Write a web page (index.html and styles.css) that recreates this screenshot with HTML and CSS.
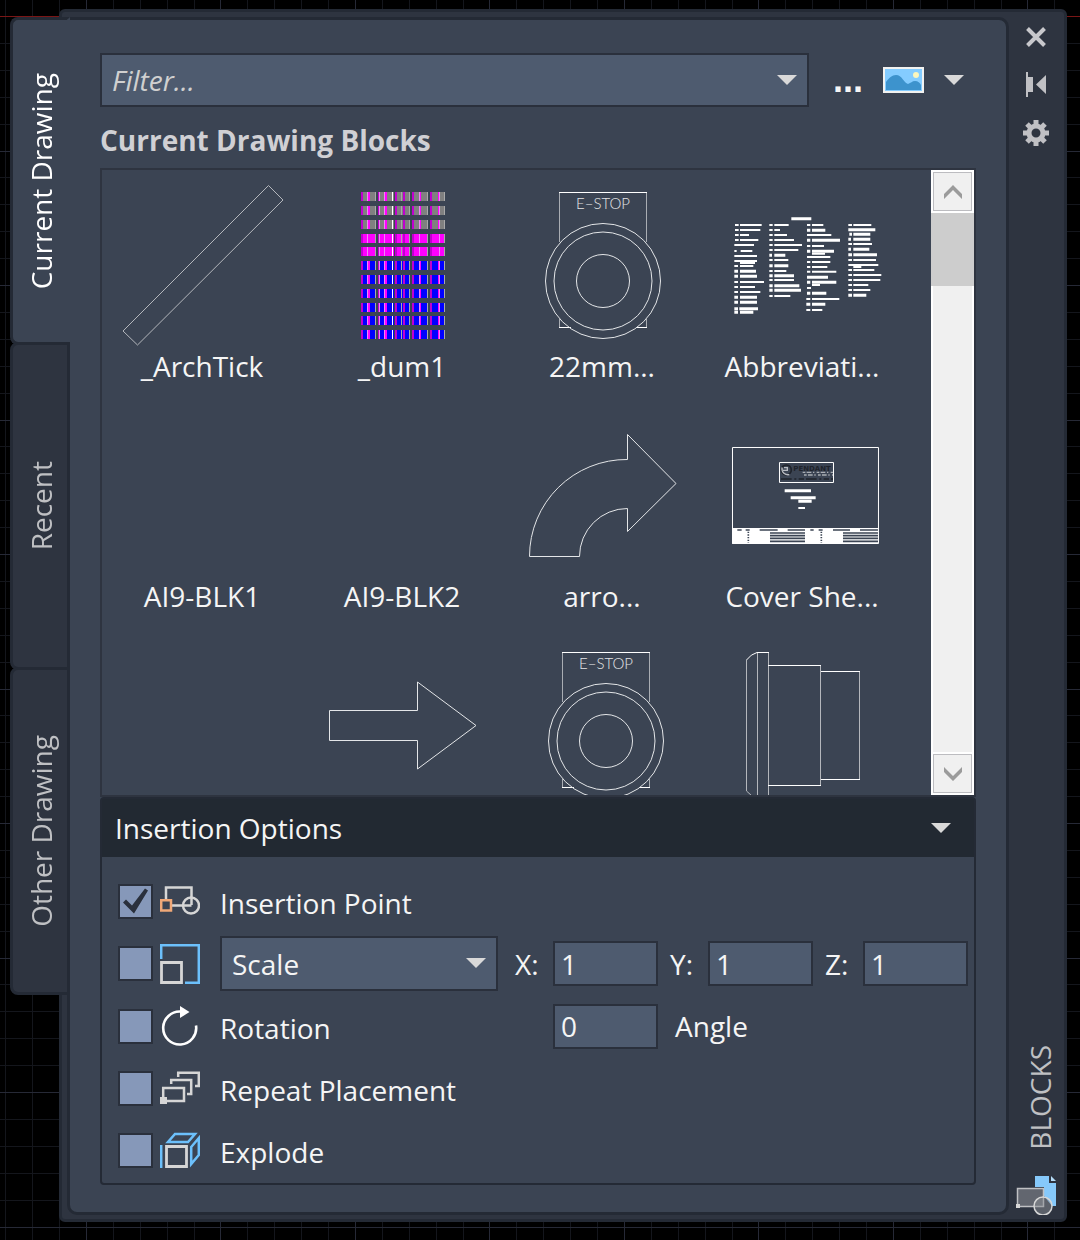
FILE: index.html
```html
<!DOCTYPE html>
<html lang="en">

<head>
    <meta charset="UTF-8">
    <meta name="viewport" content="width=device-width, initial-scale=1.0">
    <title>Blocks</title>
    <link rel="stylesheet" href="styles.css">
</head>

<body>

    <!-- drawing area grid behind the palette -->
    <svg class="canvas-grid" aria-hidden="true">
        <defs>
            <pattern id="grid" x="86" y="16" width="269" height="269" patternUnits="userSpaceOnUse">
                <path stroke="#14161c" d="M27.5 0V269M54.5 0V269M81.5 0V269M108.5 0V269M161.5 0V269M188.5 0V269M215.5 0V269M242.5 0V269M0 27.5H269M0 54.5H269M0 81.5H269M0 108.5H269M0 161.5H269M0 188.5H269M0 215.5H269M0 242.5H269" />
                <path stroke="#262936" d="M.5 0V269M134.5 0V269M0 .5H269M0 135.5H269" />
            </pattern>
        </defs>
        <rect width="100%" height="100%" fill="url(#grid)" />
        <path d="M0 16.5H4000" stroke="#7a1616" />
    </svg>

    <div class="palette">
        <nav class="tabs">
            <button class="tab active" type="button"><span>Current Drawing</span></button>
            <button class="tab" type="button"><span>Recent</span></button>
            <button class="tab" type="button"><span>Other Drawing</span></button>
        </nav>

        <main class="panel">
            <div class="toolbar">
                <div class="combo">
                    <input class="field" type="text" placeholder="Filter..." aria-label="Filter">
                    <svg class="arrow" viewBox="0 0 20 10"><path d="M0 0H20L10 10Z" /></svg>
                </div>
                <button class="tool browse" type="button">...</button>
                <button class="tool" type="button" aria-label="Thumbnail view">
                    <svg width="41" height="26" viewBox="0 0 41 26">
                        <path fill="#f2f2f0" d="M0 0H41V26H0Z" />
                        <path fill="#84ccff" d="M2 2H39V24H2Z" />
                        <path fill="#3d93cd" d="M3 15C6 11 9 8 13 8C19 8 21 16 25 17C28 16 29 14 32 14C35 14 37 16 38 18V23H3Z" />
                        <circle cx="33" cy="8" r="3" fill="#fbf6bd" />
                    </svg>
                </button>
                <button class="tool" type="button" aria-label="View options">
                    <svg width="20" height="10" viewBox="0 0 20 10"><path fill="#d9d9d9" d="M0 0H20L10 10Z" /></svg>
                </button>
            </div>

            <h2 class="heading">Current Drawing Blocks</h2>

            <div class="list">
                <div class="blocks">
                    <div class="block">
                        <svg class="thumb" viewBox="0 0 160 160"><path stroke="#b4b7bc" d="M1 146L146.5 .5 161 15 15.500 160Z" /></svg>
                        <span class="name">_ArchTick</span>
                    </div>
                    <div class="block">
                        <svg class="thumb" viewBox="0 0 160 160">
                            <defs>
                                <g id="row" stroke="none">
                                    <path fill="currentColor" d="M39 0H54V9H39ZM56 0H72V9H56ZM73 0H88V9H73ZM90 0H106V9H90ZM108 0H123V9H108Z" />
                                    <path fill="#c000d0" d="M39 0H41V9H39ZM56 0H57V9H56ZM73 0H75V9H73ZM81 0H83V9H81ZM90 0H92V9H90ZM108 0H110V9H108Z" />
                                    <path fill="#f0f" d="M46 0H48V9H46ZM63 0H65V9H63ZM98 0H99V9H98ZM116 0H117V9H116Z" />
                                    <path fill="#ee88f4" d="M45 0H46V9H45ZM57 0H58V9H57ZM62 0H63V9H62ZM97 0H98V9H97ZM117 0H118V9H117Z" />
                                    <path fill="#a9a9a9" d="M53 0H54V9H53ZM79 0H80V9H79ZM87 0H88V9H87ZM105 0H106V9H105ZM122 0H123V9H122Z" />
                                    <path fill="#fff" d="M70 0H71V9H70Z" />
                                </g>
                            </defs>
                            <use href="#row" y="7" color="#808080" />
                            <use href="#row" y="21" color="#808080" />
                            <use href="#row" y="35" color="#808080" />
                            <use href="#row" y="49" color="#f0f" />
                            <use href="#row" y="62" color="#f0f" />
                            <use href="#row" y="76" color="#00f" />
                            <use href="#row" y="90" color="#00f" />
                            <use href="#row" y="104" color="#00f" />
                            <use href="#row" y="118" color="#00f" />
                            <use href="#row" y="131" color="#00f" />
                            <use href="#row" y="145" color="#00f" />
                        </svg>
                        <span class="name">_dum1</span>
                    </div>
                    <div class="block">
                        <svg class="thumb" viewBox="0 0 160 160">
                            <defs>
                                <g id="estop">
                                    <path stroke="#a9adb3" d="M37.500 57V7.500M124.500 7.500V57M37.500 134V142M124.500 134V142" />
                                    <path stroke="#fff" d="M37 7.500H125M37 142.500H49M114 142.500H125" />
                                    <circle cx="81" cy="96" r="57.500" />
                                    <circle cx="81" cy="96" r="49" />
                                    <circle cx="81" cy="96" r="26.500" />
                                    <text class="plate" x="81" y="24">E–STOP</text>
                                </g>
                            </defs>
                            <use href="#estop" />
                        </svg>
                        <span class="name">22mm...</span>
                    </div>
                    <div class="block">
                        <svg class="thumb" viewBox="0 0 160 160">
                            <g transform="translate(-12 5) scale(.3333)" stroke="#fff">
                                <path stroke-width="6" d="M75 105h11M90 105H155M75 120h11M90 120H151M75 135h11M90 135H117M75 150h11M90 150H145M73 165H132M73 183h7M92 183H127M73 198H141M73 213H141M90 219H135M73 228h11M90 228H130M73 276h11M90 276H162M73 291h11M90 291H135M73 306h11M90 306H151" />
                                <path stroke-width="9" d="M244 86H304M73 244h11M90 244H138M73 259h11M90 259H141M73 322h11M90 322H141M73 337h11M90 337H141M73 356h11M88 356H144M73 367h11M90 367H130" />
                                <path stroke-width="6" d="M178 105h10M193 105H236M178 120h10M193 120H210M178 135h10M193 135H231M178 150h10M193 150H252M178 165h10M193 165H276M178 180h10M193 180H265M178 210h10M193 210H235M178 243h10M193 243H229M178 270h10M193 270H252M178 318h10M193 318H241" />
                                <path stroke-width="9" d="M178 196h8M193 196H226M178 227h10M193 227H235M178 257h10M193 257H252M178 287h10M193 287H268M178 301h10M193 301H273" />
                                <path stroke-width="6" d="M291 105h10M306 105H340M291 135H364M291 168h10M306 168H342M306 191H345M291 201H361M291 216h10M306 216H361M291 231h10M306 231H352M291 245h10M306 245H379M306 285H330M291 294h12M289 327h12M306 327H388M289 360h12M306 360H337" />
                                <path stroke-width="9" d="M291 121h10M306 121H346M291 151h10M306 151H390M291 184h10M306 184H372M291 262H354M291 277h10M306 277H379M291 310h10M306 310H349M289 343h12M306 343H346" />
                                <path stroke-width="6" d="M415 105h11M430 105H484M415 162h11M430 162H486M415 210h11M430 210H498M415 225H505M430 231H454M415 240h11M430 240H493M415 255h11M430 255H514M415 270h11M430 270H511M415 285h11M430 285H475M415 300h11M430 300H481" />
                                <path stroke-width="9" d="M415 119H496M418 133h8M430 133H481M415 148h8M430 148H481M415 178h8M430 178H478M415 194h11M430 194H501M415 316h11M430 316H469" />
                            </g>
                        </svg>
                        <span class="name">Abbreviati...</span>
                    </div>

                    <div class="block">
                        <svg class="thumb" viewBox="0 0 160 160"></svg>
                        <span class="name">AI9-BLK1</span>
                    </div>
                    <div class="block">
                        <svg class="thumb" viewBox="0 0 160 160"></svg>
                        <span class="name">AI9-BLK2</span>
                    </div>
                    <div class="block">
                        <svg class="thumb" viewBox="0 0 160 160"><path d="M7.500 141.500H57.500A48 48 0 0 1 105.500 93.500V116.500L154 68.500 105.500 19.500V44.500A97 97 0 0 0 7.500 141.500Z" /></svg>
                        <span class="name">arro...</span>
                    </div>
                    <div class="block">
                        <svg class="thumb" viewBox="0 0 160 160">
                            <g transform="translate(-12 15) scale(.3333)" stroke="#fff">
                                <path stroke-width="3" d="M67.500 52.500H505.500V340.500H67.500ZM208.500 97.500H370.500V157.500H208.500Z" />
                                <circle cx="229" cy="120" r="15" stroke="#1f232b" stroke-width="5" />
                                <path stroke="#b9bcc2" stroke-width="4" d="M216 112C214 128 226 136 238 134M219 121H232V113H222" />
                                <text class="logo" x="250" y="122">PENDANT</text>
                                <path stroke="#a9adb3" stroke-width="4" stroke-dasharray="8 4 14 5 4 7" d="M278 127H369M282 135H369" />
                                <path stroke="#1f232b" stroke-width="5" stroke-dasharray="32 8 6 7 16 6" d="M213 147H369" />
                                <path stroke-width="9" d="M224 182H303M242 203H317M265 214H305" />
                                <path stroke-width="6" d="M265 234H285" />
                                <path stroke="none" fill="#fff" d="M66 294H505V341H66Z" />
                                <path stroke="#3b4453" stroke-width="5" d="M82 300H95M107 300H119M149 300H203M233 300H285M301 300H311M326 300H338M369 300H420M450 300H504" />
                                <path stroke="#3b4453" stroke-width="5" d="M180 309H285M180 317H285M180 325H285M180 334H285M399 309H504M399 317H504M399 325H504M399 334H504" />
                                <path stroke="#3b4453" stroke-width="5" stroke-dasharray="4 4" d="M115 305V338M334 305V338" />
                            </g>
                        </svg>
                        <span class="name">Cover She...</span>
                    </div>

                    <div class="block">
                        <svg class="thumb" viewBox="0 0 160 160"></svg>
                    </div>
                    <div class="block">
                        <svg class="thumb" viewBox="0 0 160 160"><path d="M7.500 65.500H95.500V37L154 80.500 95.500 124V95.500H7.500Z" /></svg>
                    </div>
                    <div class="block">
                        <svg class="thumb" viewBox="0 0 160 160"><use href="#estop" x="3" /></svg>
                    </div>
                    <div class="block">
                        <svg class="thumb" viewBox="0 0 160 160">
                            <path stroke="#b4b7bc" d="M24.500 15V146M35.500 8V160M46.500 8V160M98.500 20V141M137.500 26V135M24.500 146L30 151" />
                            <path stroke="#fff" d="M24.500 15Q29 9 35 7.500H47M46 20.500H99M46 140.500H99M99 26.500H138M99 134.500H138" />
                        </svg>
                    </div>
                </div>

                <div class="scrollbar">
                    <button class="scroll-btn" type="button" aria-label="Scroll up">
                        <svg width="18" height="14" viewBox="0 0 18 14"><path fill="#9b9b9b" d="M0 9L9 0 18 9V14L9 5 0 14Z" /></svg>
                    </button>
                    <div class="scroll-thumb"></div>
                    <div class="scroll-track"></div>
                    <button class="scroll-btn" type="button" aria-label="Scroll down">
                        <svg width="18" height="14" viewBox="0 0 18 14"><path fill="#9b9b9b" d="M0 5L9 14 18 5V0L9 9 0 0Z" /></svg>
                    </button>
                </div>
            </div>

            <section class="options">
                <button class="options-header" type="button">
                    <span>Insertion Options</span>
                    <svg width="20" height="10" viewBox="0 0 20 10"><path fill="#d9d9d9" d="M0 0H20L10 10Z" /></svg>
                </button>

                <div class="options-body">
                    <div class="option">
                        <input class="check" type="checkbox" id="opt-point" checked>
                        <svg class="icon" viewBox="0 0 40 40">
                            <path stroke="#d6d6d6" stroke-width="2.5" d="M6 18V6.500H31.500V24M12 24.500H31.500" />
                            <circle cx="31" cy="24.500" r="8" stroke="#d6d6d6" stroke-width="2.500" />
                            <path stroke="#f0a878" stroke-width="2.500" d="M1.200 19.200H11V29.500H1.200Z" />
                        </svg>
                        <label class="label" for="opt-point">Insertion Point</label>
                    </div>

                    <div class="option">
                        <input class="check" type="checkbox" id="opt-scale" aria-label="Scale">
                        <svg class="icon" viewBox="0 0 40 40">
                            <path stroke="#6cc0fb" stroke-width="2.500" d="M1.200 15V1.200H38.800V38.800H25" />
                            <path stroke="#d6d6d6" stroke-width="2.800" d="M1.500 18.500H21.500V38.500H1.500Z" />
                        </svg>
                        <div class="combo scale">
                            <select class="field" aria-label="Scale type">
                                <option>Scale</option>
                                <option>Uniform Scale</option>
                            </select>
                            <svg class="arrow" viewBox="0 0 20 10"><path d="M0 0H20L10 10Z" /></svg>
                        </div>
                        <div class="values">
                            <label class="axis" for="x">X:</label>
                            <input class="number" type="text" id="x" value="1">
                            <label class="axis" for="y">Y:</label>
                            <input class="number" type="text" id="y" value="1">
                            <label class="axis" for="z">Z:</label>
                            <input class="number" type="text" id="z" value="1">
                        </div>
                    </div>

                    <div class="option">
                        <input class="check" type="checkbox" id="opt-rotation">
                        <svg class="icon" viewBox="0 0 40 40">
                            <path stroke="#fff" stroke-width="2.600" d="M36 19.500A16.500 16.500 0 1 1 21 5.600" />
                            <path fill="#fff" d="M20 0L29.500 6 20 12Z" />
                        </svg>
                        <label class="label" for="opt-rotation">Rotation</label>
                        <div class="values angle">
                            <input class="number" type="text" id="angle" value="0">
                            <label for="angle">Angle</label>
                        </div>
                    </div>

                    <div class="option">
                        <input class="check" type="checkbox" id="opt-repeat">
                        <svg class="icon" viewBox="0 0 40 40">
                            <path stroke="#d6d6d6" stroke-width="2.500" d="M18.200 9V4.800H38.800V18H35M11.200 16V12H31.200V26H27M3.200 29V20H24V33H6" />
                            <path fill="#d6d6d6" d="M0 29H7V36H0Z" />
                        </svg>
                        <label class="label" for="opt-repeat">Repeat Placement</label>
                    </div>

                    <div class="option">
                        <input class="check" type="checkbox" id="opt-explode">
                        <svg class="icon" viewBox="0 0 40 40">
                            <path stroke="#6cc0fb" stroke-width="2.500" d="M1.200 15V38M15 4H35L28 12H8ZM31.200 17L38.800 8V25L31.200 34Z" />
                            <path stroke="#d6d6d6" stroke-width="2.800" d="M6.500 16.500H26.500V36.500H6.500Z" />
                        </svg>
                        <label class="label" for="opt-explode">Explode</label>
                    </div>
                </div>
            </section>
        </main>

        <aside class="titlebar">
            <button class="tool" type="button" aria-label="Close">
                <svg width="26" height="26" viewBox="0 0 26 26"><path stroke="#c8c8cc" stroke-width="4" d="M4.500 4.500L21.500 21.500M21.500 4.500L4.500 21.500" /></svg>
            </button>
            <button class="tool" type="button" aria-label="Auto-hide">
                <svg width="26" height="26" viewBox="0 0 26 26"><path fill="#c0c0c4" d="M3 0H5V5H10V20H5V25H3ZM23 3V22L13 12.500Z" /></svg>
            </button>
            <button class="tool" type="button" aria-label="Properties">
                <svg width="26" height="26" viewBox="0 0 26 26">
                    <path stroke="#c0c0c4" stroke-width="5" d="M13 0V6M13 20V26M0 13H6M20 13H26M4 4L8 8M18 18L22 22M4 22L8 18M18 8L22 4" />
                    <circle cx="13" cy="13" r="7" stroke="#c0c0c4" stroke-width="5" />
                </svg>
            </button>
            <span class="title">BLOCKS</span>
            <svg width="40" height="40" viewBox="0 0 40 40">
                <path fill="#86c9fb" d="M19 1H33V8H40V31H36L28 21V12H19Z" />
                <path fill="#b5dcf8" d="M35 1L40 6H35Z" />
                <path fill="#62666f" stroke="#bfc0c3" stroke-width="1.500" d="M1.500 13.500H27.500V31.500H1.500Z" />
                <circle cx="27" cy="31" r="9" fill="#8a8d93" fill-opacity=".5" stroke="#d6d6d6" stroke-width="1.500" />
                <path fill="#d6d6d6" d="M0 29H4V33H0Z" />
            </svg>
        </aside>
    </div>

</body>

</html>
```
FILE: styles.css
```css
* {
    box-sizing: border-box;
}

body {
    margin: 0;
    background-color: #000;
    color: #f5f5f5;
    font-family: "Open Sans", "Noto Sans", sans-serif;
    font-size: 28px;
    line-height: 40px;
}

button,
input,
select {
    font: inherit;
    color: inherit;
    margin: 0;
}

button {
    padding: 0;
    border: none;
    background: none;
}

svg {
    display: block;
    fill: none;
}

.canvas-grid {
    position: fixed;
    top: 0;
    left: 0;
    width: 100%;
    height: 100%;
}

.palette {
    position: relative;
    display: flex;
    align-items: stretch;
    margin: 9px 13px 18px 59px;
    padding: 5px 0 4px 5px;
    border: 3px solid #242a35;
    border-radius: 6px;
    background-color: #2e3440;
}

/* tabs stick out of the left side of the frame */
.tabs {
    position: relative;
    z-index: 1;
    flex: none;
    width: 60px;
    margin-left: -57px;
    margin-right: -3px;
}

.tab {
    display: flex;
    align-items: center;
    justify-content: center;
    width: 60px;
    height: 328px;
    margin-bottom: -3px;
    padding-left: 2px;
    border: 3px solid #242a35;
    border-radius: 8px 0 0 8px;
    background-color: #2e3440;
    color: #bfc0c3;
}

.tab span,
.title {
    writing-mode: vertical-rl;
    transform: rotate(180deg);
}

.tab.active {
    border-right-color: #3b4453;
    background-color: #3b4453;
    color: #fff;
}

.panel {
    flex: 1;
    min-width: 0;
    padding: 33px 30px 27px;
    border: 3px solid #242a35;
    border-radius: 0 10px 10px 10px;
    background-color: #3b4453;
}

.toolbar {
    display: flex;
    align-items: center;
    padding-right: 12px;
}

.toolbar .combo {
    flex: 1;
    margin-right: 24px;
}

.combo {
    position: relative;
}

.field {
    display: block;
    width: 100%;
    height: 54px;
    padding: 0 40px 0 10px;
    border: 2px solid #2a303c;
    border-radius: 0;
    background-color: #4e5b6f;
    appearance: none;
}

.field::placeholder {
    color: #d0d0d0;
    font-style: italic;
    opacity: 1;
}

.arrow {
    position: absolute;
    top: 22px;
    right: 12px;
    width: 20px;
    height: 10px;
    fill: #d9d9d9;
    pointer-events: none;
}

.tool + .tool {
    margin-left: 20px;
}

.browse {
    font-family: "Liberation Sans", sans-serif;
    font-size: 36px;
    font-weight: bold;
}

.heading {
    margin: 13px 0 8px;
    color: #d0d0d4;
    font-size: 28px;
    font-weight: bold;
}

.list {
    display: flex;
    height: 629px;
    border: 2px solid #2e3440;
}

.blocks {
    flex: 1;
    display: grid;
    grid-template-columns: repeat(auto-fill, 200px);
    grid-auto-rows: 230px;
    overflow: hidden;
}

.block {
    display: flex;
    flex-direction: column;
    align-items: center;
    padding-top: 15px;
}

.thumb {
    width: 160px;
    height: 160px;
    overflow: visible;
    stroke: #e4e6e8;
}

.name {
    line-height: 42px;
}

.plate {
    fill: #e4e4e6;
    stroke: none;
    font-family: Lato, sans-serif;
    font-size: 15px;
    font-weight: 300;
    text-anchor: middle;
}

.logo {
    fill: #1f232b;
    stroke: none;
    font-family: "DejaVu Sans", sans-serif;
    font-size: 21px;
    font-weight: bold;
}

.scrollbar {
    display: flex;
    flex-direction: column;
    width: 43px;
    background-color: #fff;
}

.scroll-btn {
    display: flex;
    align-items: center;
    justify-content: center;
    height: 39px;
    margin: 2px;
    border: 1px solid #bcbcc0;
    background-color: #f0f0f0;
}

.scroll-thumb {
    height: 73px;
    background-color: #cdcdcd;
}

.scroll-track {
    flex: 1;
    margin: 0 2px;
    background-color: #f0f0f0;
}

.options {
    border: 2px solid #242a35;
    border-radius: 4px;
}

.options-header {
    display: flex;
    align-items: center;
    justify-content: space-between;
    width: 100%;
    height: 58px;
    padding: 0 23px 0 13px;
    background-color: #222932;
}

.options-body {
    padding: 13px 6px 2px 16px;
}

.option {
    display: flex;
    align-items: center;
    min-height: 62px;
    padding: 4px 0;
}

.check {
    flex: none;
    width: 35px;
    height: 35px;
    border: 2px solid #2a303c;
    background-color: #8698b9;
    appearance: none;
}

.check:checked::before {
    content: "";
    display: block;
    width: 31px;
    height: 31px;
    background-color: #2a303c;
    clip-path: polygon(3px 17px, 6px 14px, 12px 20px, 25px 3px, 28px 5px, 14px 28px);
}

.icon {
    flex: none;
    width: 40px;
    height: 40px;
    margin: 0 20px 0 7px;
}

.label {
    flex: 1;
    padding-top: 3px;
}

.scale {
    flex: 1;
}

.scale .field {
    height: 55px;
}

.values {
    display: flex;
    align-items: center;
    width: 453px;
    margin-left: 17px;
}

.axis {
    width: 38px;
}

.number {
    width: 105px;
    height: 45px;
    margin-right: 12px;
    padding: 0 6px;
    border: 2px solid #2a303c;
    background-color: #4e5b6f;
}

.number:last-child {
    margin-right: 0;
}

.angle {
    padding-left: 38px;
}

.angle .number {
    margin-right: 17px;
}

.titlebar {
    display: flex;
    flex-direction: column;
    align-items: center;
    width: 55px;
    padding: 7px 2px 0 0;
}

.titlebar .tool + .tool {
    margin: 22px 0 0;
}

.title {
    margin: auto 0 25px 8px;
    color: #bfc0c3;
}
```
